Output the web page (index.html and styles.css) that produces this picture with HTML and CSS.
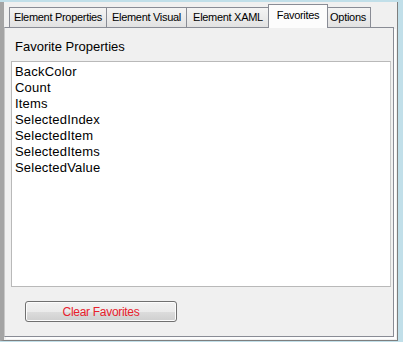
FILE: index.html
```html
<!DOCTYPE html>
<html>
<head>
<meta charset="utf-8">
<link rel="stylesheet" href="styles.css">
</head>
<body>
<div class="window">
  <div class="tabs">
    <div class="tab w-props">Element Properties</div>
    <div class="tab w-visual">Element Visual</div>
    <div class="tab w-xaml">Element XAML</div>
    <div class="tab active w-fav">Favorites</div>
    <div class="tab w-opt">Options</div>
  </div>
  <div class="panel">
    <div class="label">Favorite Properties</div>
    <div class="listbox">
      <div class="item">BackColor</div>
      <div class="item">Count</div>
      <div class="item">Items</div>
      <div class="item">SelectedIndex</div>
      <div class="item">SelectedItem</div>
      <div class="item">SelectedItems</div>
      <div class="item">SelectedValue</div>
    </div>
    <div class="button">Clear Favorites</div>
  </div>
</div>
</body>
</html>
```
FILE: styles.css
```css
html, body {
  margin: 0;
  padding: 0;
}
body {
  width: 403px;
  height: 342px;
  overflow: hidden;
  background: #c1dfe9;
  font-family: "Liberation Sans", Arial, sans-serif;
  color: #000;
}
.window {
  margin-top: 2px;
  width: 398px;
  height: 339px;
  box-sizing: border-box;
  background: #f0f0f0;
  border-left: 4px solid #a4a4a4;
  border-right: 1px solid #7e7e7e;
  border-bottom: 1px solid #7e7e7e;
  padding: 0 3px 3px 0;
  display: flex;
  flex-direction: column;
}
.tabs {
  height: 25px;
  flex: none;
  display: flex;
  align-items: flex-end;
  padding-left: 5px;
}
.tab {
  box-sizing: border-box;
  height: 20px;
  border: 1px solid #898c95;
  border-bottom: none;
  margin-left: -1px;
  background: linear-gradient(#f4f4f4, #e2e2e2);
  font-size: 11px;
  letter-spacing: -0.3px;
  display: flex;
  align-items: center;
  justify-content: center;
  padding-bottom: 1px;
  white-space: nowrap;
}
.tab:first-child {
  margin-left: 0;
}
.tab.active {
  height: 24px;
  margin-bottom: -1px;
  margin-left: -2px;
  margin-right: -2px;
  background: #fcfcfc;
  position: relative;
  z-index: 1;
  padding-bottom: 4px;
}
.w-props { width: 98px; }
.w-visual { width: 81px; }
.w-xaml { width: 84px; }
.w-fav { width: 60px; }
.w-opt { width: 46px; }
.panel {
  flex: none;
  height: 310px;
  box-sizing: border-box;
  border: 1px solid #898c95;
  border-left-color: #c8c8c8;
  background: #f0f0f0;
  box-shadow: 2px 2px 0 #fdfdfd;
  padding: 11px 2px 14px 6px;
  display: flex;
  flex-direction: column;
}
.label {
  font-size: 13px;
  line-height: 16px;
  padding-left: 4px;
}
.listbox {
  margin-top: 6px;
  height: 226px;
  box-sizing: border-box;
  background: #fff;
  border: 1px solid #b9b9b9;
  border-right-color: #c9c9c9;
  padding: 2px 3px;
}
.item {
  font-size: 13px;
  line-height: 16px;
  letter-spacing: 0.2px;
}
.button {
  margin-top: 14px;
  margin-left: 14px;
  width: 152px;
  height: 21px;
  box-sizing: border-box;
  border: 1px solid #707070;
  border-radius: 3px;
  background: linear-gradient(#f2f2f2 0%, #ebebeb 50%, #dddddd 50%, #cfcfcf 100%);
  box-shadow: inset 0 0 0 1px #fcfcfc;
  color: #e8202c;
  font-size: 12px;
  letter-spacing: -0.3px;
  display: flex;
  align-items: center;
  justify-content: center;
}
```
